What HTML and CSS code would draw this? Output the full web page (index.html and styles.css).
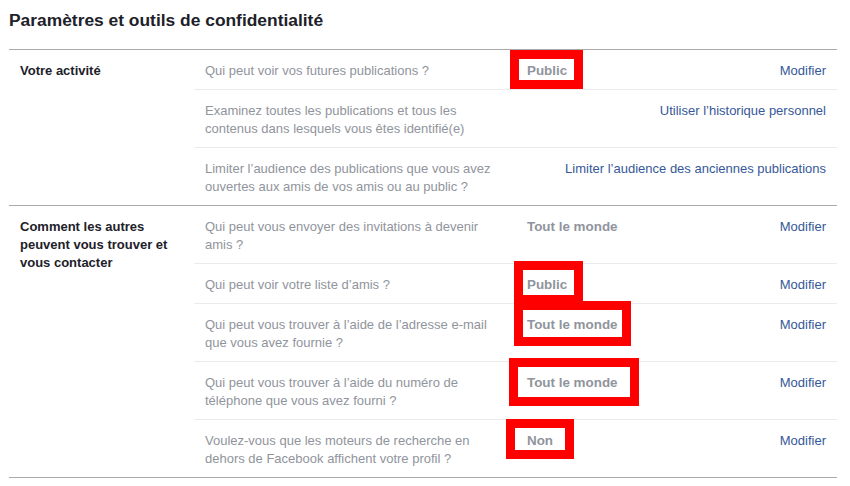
FILE: index.html
```html
<!DOCTYPE html>
<html lang="fr">
<head>
<meta charset="utf-8">
<link rel="stylesheet" href="styles.css">
</head>
<body>
<div class="page">
  <h1 class="title">Paramètres et outils de confidentialité</h1>

  <section class="section">
    <div class="label">Votre activité</div>
    <div class="rows">
      <div class="row">
        <div class="q">Qui peut voir vos futures publications ?</div>
        <div class="val">Public</div>
        <a class="link">Modifier</a>
      </div>
      <div class="row">
        <div class="q">Examinez toutes les publications et tous les contenus dans lesquels vous êtes identifié(e)</div>
        <a class="link wide">Utiliser l’historique personnel</a>
      </div>
      <div class="row">
        <div class="q">Limiter l’audience des publications que vous avez ouvertes aux amis de vos amis ou au public ?</div>
        <a class="link wide">Limiter l’audience des anciennes publications</a>
      </div>
    </div>
  </section>

  <section class="section last">
    <div class="label">Comment les autres peuvent vous trouver et vous contacter</div>
    <div class="rows">
      <div class="row">
        <div class="q">Qui peut vous envoyer des invitations à devenir amis ?</div>
        <div class="val">Tout le monde</div>
        <a class="link">Modifier</a>
      </div>
      <div class="row">
        <div class="q">Qui peut voir votre liste d’amis ?</div>
        <div class="val">Public</div>
        <a class="link">Modifier</a>
      </div>
      <div class="row">
        <div class="q">Qui peut vous trouver à l’aide de l’adresse e-mail que vous avez fournie ?</div>
        <div class="val">Tout le monde</div>
        <a class="link">Modifier</a>
      </div>
      <div class="row">
        <div class="q">Qui peut vous trouver à l’aide du numéro de téléphone que vous avez fourni ?</div>
        <div class="val">Tout le monde</div>
        <a class="link">Modifier</a>
      </div>
      <div class="row">
        <div class="q">Voulez-vous que les moteurs de recherche en dehors de Facebook affichent votre profil ?</div>
        <div class="val">Non</div>
        <a class="link">Modifier</a>
      </div>
    </div>
  </section>

  <div class="mark m1"></div>
  <div class="mark m2"></div>
  <div class="mark m3"></div>
  <div class="mark m4"></div>
  <div class="mark m5"></div>
</div>
</body>
</html>
```

FILE: styles.css
```css
html, body {
  margin: 0;
  padding: 0;
  background: #ffffff;
}

.page {
  position: relative;
  width: 828px;
  margin-left: 9px;
  font-family: "Liberation Sans", Arial, Helvetica, sans-serif;
  font-size: 13px;
  line-height: 18px;
  color: #1d2129;
}

.title {
  margin: 0;
  padding: 11px 0 20px;
  font-size: 17.4px;
  line-height: 18px;
  font-weight: bold;
  color: #1d2129;
}

.section {
  display: flex;
  border-top: 1px solid #aaaaaa;
}

.section.last {
  border-bottom: 1px solid #aaaaaa;
}

.label {
  width: 162px;
  flex: none;
  padding: 12px 12px 0 11px;
  font-weight: bold;
  color: #1d2129;
}

.rows {
  flex: 1;
  display: flex;
  flex-direction: column;
}

.row {
  display: flex;
  align-items: flex-start;
  padding: 12px 11px 9px 11px;
  border-bottom: 1px solid #e9ebee;
}

.row:last-child {
  border-bottom: none;
}

.q {
  width: 295px;
  flex: none;
  color: #90949c;
}

.val {
  flex: 1;
  margin-left: 27px;
  font-weight: bold;
  font-size: 13.4px;
  color: #90949c;
}

.link {
  color: #365899;
  text-decoration: none;
  white-space: nowrap;
}

.link.wide {
  margin-left: auto;
}

.mark {
  position: absolute;
  box-sizing: border-box;
  border: 9px solid #ff0000;
}

.m1 { left: 501px; top: 50px;  width: 73px;  height: 39px; }
.m2 { left: 505px; top: 261px; width: 69px;  height: 43px; }
.m3 { left: 505px; top: 301px; width: 117px; height: 45px; }
.m4 { left: 500px; top: 358px; width: 130px; height: 48px; }
.m5 { left: 497px; top: 419px; width: 68px;  height: 40px; }
```
